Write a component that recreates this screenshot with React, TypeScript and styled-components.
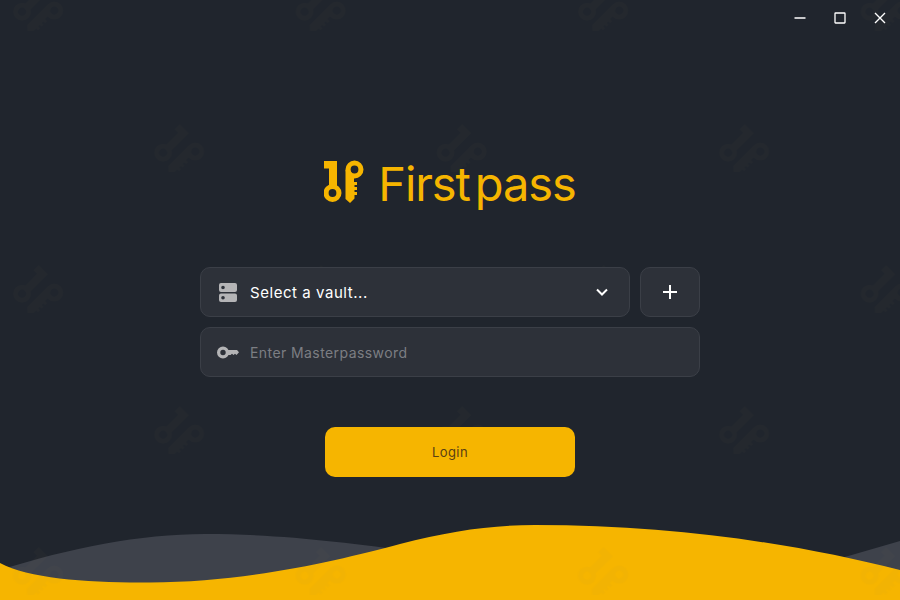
import React from 'react';
import styled, { createGlobalStyle } from 'styled-components';

const ring = (cx: number, cy: number, r: number, hole: number) =>
  `M${cx - r} ${cy}a${r} ${r} 0 1 0 ${2 * r} 0a${r} ${r} 0 1 0 ${-2 * r} 0z` +
  `M${cx - hole} ${cy}a${hole} ${hole} 0 1 0 ${2 * hole} 0a${hole} ${hole} 0 1 0 ${-2 * hole} 0z`;

const KeyPair: React.FC = () => (
  <>
    <path d="M325 161H338V187H330V168.500H325Z" />
    <path fillRule="evenodd" d={ring(333.5, 193, 9, 3.9)} />
    <path fillRule="evenodd" d={ring(355.5, 169.5, 9, 3.9)} />
    <path d="M346.500 170H351L355 177V182H358V185H355.500V187H358V190H355.500V192H358V195H355.500V198.500L351 203L346.500 199Z" />
  </>
);

const App: React.FC = () => {
  return (
    <Page>
      <GlobalStyle />
      <Waves viewBox="0 0 900 100" preserveAspectRatio="none">
        <path fill="#3e424b" d="M0 70C70 48 140 34 205 34C280 34 340 42 420 52V100H0Z" />
        <path fill="#3e424b" d="M800 70L900 41V100H800Z" />
        <path fill="#f6b500" d="M0 63C30 79 90 83 150 82.500C250 82 340 60 400 44C450 31 490 25 535 25C680 25 800 45 900 70V100H0Z" />
      </Waves>
      <Watermark>
        <defs>
          <pattern id="tile" width="282.500" height="282" patternUnits="userSpaceOnUse" x="-32" y="-58">
            <g transform="translate(-275 -112) rotate(45 345 182)"><KeyPair /></g>
            <g transform="translate(-134 29) rotate(45 345 182)"><KeyPair /></g>
          </pattern>
        </defs>
        <rect width="900" height="600" fill="url(#tile)" />
      </Watermark>
      <TitleBar>
        <WindowButton aria-label="Minimize">
          <svg width="12" height="12" viewBox="0 0 12 12"><path d="M0.500 6h11" stroke="#fff" strokeWidth="1.500" /></svg>
        </WindowButton>
        <WindowButton aria-label="Maximize">
          <svg width="12" height="12" viewBox="0 0 12 12"><rect x="1" y="1" width="10" height="10" rx="0.500" fill="none" stroke="#fff" strokeWidth="1.300" /></svg>
        </WindowButton>
        <WindowButton aria-label="Close">
          <svg width="12" height="12" viewBox="0 0 12 12"><path d="M1 1l10 10M11 1L1 11" stroke="#fff" strokeWidth="1.400" /></svg>
        </WindowButton>
      </TitleBar>
      <Main>
        <Brand>
          <LogoMark viewBox="325 158 40 50">
            <KeyPair />
          </LogoMark>
          <BrandName>First<BrandGap />pass</BrandName>
        </Brand>
        <Form>
          <Row>
            <SelectBox>
              <FieldIcon viewBox="0 0 18 19">
                <path fillRule="evenodd" fill="#b4b4b6" d="M2 0h14a2 2 0 0 1 2 2v5a2 2 0 0 1-2 2H2a2 2 0 0 1-2-2V2a2 2 0 0 1 2-2zM4 2.700a1.800 1.800 0 1 0 0 3.600a1.800 1.800 0 0 0 0-3.600zM2 10.500h14a2 2 0 0 1 2 2V17a2 2 0 0 1-2 2H2a2 2 0 0 1-2-2v-4.500a2 2 0 0 1 2-2zM4 12.900a1.800 1.800 0 1 0 0 3.600a1.800 1.800 0 0 0 0-3.600z" />
              </FieldIcon>
              <SelectText>Select a vault...</SelectText>
              <svg width="14" height="14" viewBox="0 0 14 14"><path d="M2 4.500l5 5l5-5" fill="none" stroke="#fff" strokeWidth="2" /></svg>
            </SelectBox>
            <AddButton aria-label="Add vault">
              <svg width="16" height="16" viewBox="0 0 16 16"><path d="M8 1v14M1 8h14" stroke="#fff" strokeWidth="2" /></svg>
            </AddButton>
          </Row>
          <PasswordBox>
            <KeyIcon viewBox="0 0 22 13">
              <path fillRule="evenodd" fill="#b4b4b6" d={ring(6, 6.5, 6, 2.7)} />
              <path fill="#b4b4b6" d="M11 4H20L22 6.200L19.500 9L18 7.800L16.500 9L15 7.800L13.500 9H11Z" />
            </KeyIcon>
            <PasswordInput type="password" placeholder="Enter Masterpassword" />
          </PasswordBox>
        </Form>
        <LoginButton>Login</LoginButton>
      </Main>
    </Page>
  );
};

export default App;

const GlobalStyle = createGlobalStyle`
  html, body, #root {
    margin: 0;
    width: 100%;
    height: 100%;
  }
  body {
    font-family: Inter, "Open Sans", "Liberation Sans", sans-serif;
    background-color: #20252d;
  }
`;

const Page = styled.div`
  position: relative;
  width: 900px;
  height: 600px;
  overflow: hidden;
  background-color: #20252d;
`;

const Waves = styled.svg`
  position: absolute;
  left: 0;
  bottom: 0;
  width: 900px;
  height: 100px;
`;

const Watermark = styled.svg`
  position: absolute;
  inset: 0;
  width: 900px;
  height: 600px;
  fill: #9a8a5a;
  opacity: 0.03;
`;

const TitleBar = styled.div`
  position: relative;
  display: flex;
  justify-content: flex-end;
  height: 36px;
`;

const WindowButton = styled.button`
  display: flex;
  align-items: center;
  justify-content: center;
  width: 40px;
  height: 36px;
  padding: 0;
  border: none;
  background: transparent;
`;

const Main = styled.div`
  position: relative;
  display: flex;
  flex-direction: column;
  align-items: center;
`;

const Brand = styled.div`
  display: flex;
  align-items: flex-start;
  height: 60px;
  margin-top: 122px;
`;

const LogoMark = styled.svg`
  width: 40px;
  height: 50px;
  fill: #f6b500;
`;

const BrandName = styled.div`
  display: flex;
  margin-left: 14px;
  padding-top: 2px;
  font-size: 47px;
  line-height: 48px;
  font-weight: 400;
  letter-spacing: -1.1px;
  color: #f6b500;
`;

const BrandGap = styled.span`
  width: 5px;
`;

const Form = styled.div`
  display: flex;
  flex-direction: column;
  gap: 10px;
  width: 500px;
  margin-top: 49px;
`;

const Row = styled.div`
  display: flex;
  gap: 10px;
`;

const fieldBox = `
  box-sizing: border-box;
  height: 50px;
  background-color: #2d3139;
  border: 1px solid #3b3f47;
  border-radius: 10px;
`;

const SelectBox = styled.div`
  ${fieldBox}
  flex: 1;
  display: flex;
  align-items: center;
  padding: 0 20px 0 18px;
`;

const FieldIcon = styled.svg`
  flex: none;
  width: 18px;
  height: 19px;
`;

const SelectText = styled.span`
  flex: 1;
  margin-left: 13px;
  font-size: 15px;
  font-weight: 400;
  letter-spacing: 0.55px;
  color: #ffffff;
`;

const AddButton = styled.button`
  ${fieldBox}
  display: flex;
  align-items: center;
  justify-content: center;
  width: 60px;
  padding: 0;
`;

const PasswordBox = styled.div`
  ${fieldBox}
  display: flex;
  align-items: center;
  padding: 0 16px;
`;

const KeyIcon = styled.svg`
  flex: none;
  width: 22px;
  height: 13px;
`;

const PasswordInput = styled.input`
  flex: 1;
  margin-left: 11px;
  padding: 0;
  border: none;
  outline: none;
  background: transparent;
  font-family: inherit;
  font-size: 14px;
  font-weight: 400;
  letter-spacing: 0.42px;
  color: #ffffff;

  &::placeholder {
    color: #7c7e83;
    opacity: 1;
  }
`;

const LoginButton = styled.button`
  width: 250px;
  height: 50px;
  margin-top: 50px;
  border: none;
  border-radius: 10px;
  background-color: #f6b500;
  font-family: inherit;
  font-size: 13px;
  font-weight: 400;
  letter-spacing: 0.4px;
  color: #5a4014;
`;
